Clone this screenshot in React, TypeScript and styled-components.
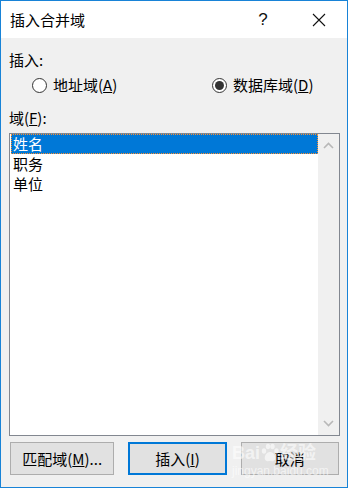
import React from "react";
import styled, { createGlobalStyle } from "styled-components";

const GlobalStyle = createGlobalStyle`
  html, body {
    margin: 0;
    padding: 0;
    background: #f0f0f0;
  }
  * {
    box-sizing: border-box;
  }
`;

const FONT = `"Noto Sans CJK SC", "Liberation Sans", sans-serif`;

interface IItem {
  name: string;
  selected?: boolean;
}

const items: IItem[] = [{ name: "姓名", selected: true }, { name: "职务" }, { name: "单位" }];

const Paw: React.FC = () => (
  <svg width="20" height="20" viewBox="0 0 20 20">
    <g fill="currentColor">
      <ellipse cx="4" cy="8" rx="2.2" ry="2.8" />
      <ellipse cx="8" cy="3.5" rx="2.2" ry="2.8" />
      <ellipse cx="12.5" cy="3.5" rx="2.2" ry="2.8" />
      <ellipse cx="16.5" cy="8" rx="2.2" ry="2.8" />
      <path d="M10 9 C6 9 4 14 5 16.5 C6 19 9 18 10 18 C11 18 14 19 15 16.5 C16 14 14 9 10 9 Z" />
    </g>
  </svg>
);

const App: React.FC = () => {
  return (
    <Dialog>
      <GlobalStyle />
      <TitleBar>
        <Title>插入合并域</Title>
        <CaptionButton>?</CaptionButton>
        <CaptionButton>
          <svg width="14" height="14" viewBox="0 0 14 14">
            <path d="M1 1 L13 13 M13 1 L1 13" stroke="#111" strokeWidth="1.1" />
          </svg>
        </CaptionButton>
      </TitleBar>
      <Body>
        <Label top={12}>插入:</Label>
        <RadioRow>
          <RadioItem width={180}>
            <RadioCircle />
            <span>
              地址域(<u>A</u>)
            </span>
          </RadioItem>
          <RadioItem>
            <RadioCircle checked />
            <span>
              数据库域(<u>D</u>)
            </span>
          </RadioItem>
        </RadioRow>
        <Label top={13}>
          域(<u>F</u>):
        </Label>
        <ListBox>
          <Items>
            {items.map((it) => (
              <Item key={it.name} selected={it.selected}>
                {it.name}
              </Item>
            ))}
          </Items>
          <ScrollBar>
            <svg width="11" height="7" viewBox="0 0 11 7">
              <path d="M1 6 L5.5 1.5 L10 6" fill="none" stroke="#b8b8b8" strokeWidth="1.6" />
            </svg>
            <svg width="11" height="7" viewBox="0 0 11 7">
              <path d="M1 1 L5.5 5.5 L10 1" fill="none" stroke="#b8b8b8" strokeWidth="1.6" />
            </svg>
          </ScrollBar>
        </ListBox>
        <Buttons>
          <Button width={105}>
            匹配域(<u>M</u>)...
          </Button>
          <Button width={99} primary>
            插入(<u>I</u>)
          </Button>
          <Button width={99}>取消</Button>
        </Buttons>
        <Watermark>
          <WaterLogo>
            Bai
            <Paw />
            经验
          </WaterLogo>
          <WaterUrl>jingyan.baidu.com</WaterUrl>
        </Watermark>
      </Body>
    </Dialog>
  );
};

const Dialog = styled.div`
  width: 348px;
  height: 488px;
  border: 1px solid #1883d7;
  display: flex;
  flex-direction: column;
  font-family: ${FONT};
  color: #000;
  background: #f0f0f0;
`;

const TitleBar = styled.div`
  height: 37px;
  background: #fff;
  display: flex;
  align-items: center;
  padding-left: 9px;
`;

const Title = styled.div`
  font-size: 15px;
  flex: 1;
  margin-top: -1px;
`;

const CaptionButton = styled.div`
  width: 56px;
  height: 37px;
  display: flex;
  align-items: center;
  justify-content: center;
  font-family: "Liberation Sans", sans-serif;
  font-size: 17px;
  color: #111;
`;

const Body = styled.div`
  position: relative;
  flex: 1;
  display: flex;
  flex-direction: column;
  padding: 0 8px 12px 8px;
  font-size: 15px;
`;

const Label = styled.div<{ top: number }>`
  margin-top: ${(p) => p.top}px;
  height: 20px;
  line-height: 20px;
`;

const RadioRow = styled.div`
  display: flex;
  margin-top: 5px;
  height: 20px;
  padding-left: 23px;
`;

const RadioItem = styled.div<{ width?: number }>`
  display: flex;
  align-items: center;
  gap: 6px;
  width: ${(p) => (p.width ? `${p.width}px` : "auto")};
  line-height: 20px;
`;

const RadioCircle = styled.span<{ checked?: boolean }>`
  flex: none;
  width: 15px;
  height: 15px;
  border-radius: 50%;
  border: 1px solid #333;
  background: #fff;
  display: flex;
  align-items: center;
  justify-content: center;
  &::after {
    content: "";
    display: ${(p) => (p.checked ? "block" : "none")};
    width: 9px;
    height: 9px;
    border-radius: 50%;
    background: #333;
  }
`;

const ListBox = styled.div`
  margin-top: 5px;
  height: 303px;
  width: 331px;
  border: 1px solid #828790;
  background: #fff;
  display: flex;
`;

const Items = styled.div`
  width: 308px;
  flex: none;
  padding-left: 1px;
  font-size: 15px;
`;

const Item = styled.div<{ selected?: boolean }>`
  height: 20px;
  line-height: 20px;
  padding-left: 2px;
  background: ${(p) => (p.selected ? "#0078d7" : "transparent")};
  color: ${(p) => (p.selected ? "#fff" : "#000")};
  outline: ${(p) => (p.selected ? "1px dotted #ff8f2e" : "none")};
  outline-offset: -1px;
`;

const ScrollBar = styled.div`
  width: 21px;
  flex: none;
  background: #f0f0f0;
  display: flex;
  flex-direction: column;
  justify-content: space-between;
  align-items: center;
  padding: 8px 0;
`;

const Buttons = styled.div`
  display: flex;
  gap: 14px;
  margin-top: 6px;
  padding-left: 1px;
`;

const Button = styled.div<{ width: number; primary?: boolean }>`
  width: ${(p) => p.width}px;
  height: 33px;
  background: #e1e1e1;
  border: ${(p) => (p.primary ? "2px solid #0078d7" : "1px solid #adadad")};
  display: flex;
  align-items: center;
  justify-content: center;
  font-size: 15px;
`;

const Watermark = styled.div`
  position: absolute;
  left: 231px;
  top: 404px;
  display: flex;
  flex-direction: column;
  color: rgba(255, 255, 255, 0.6);
  pointer-events: none;
`;

const WaterLogo = styled.div`
  display: flex;
  align-items: center;
  font-family: "Liberation Sans", ${FONT};
  font-size: 18px;
  font-weight: bold;
  line-height: 22px;
`;

const WaterUrl = styled.div`
  font-family: "Liberation Sans", sans-serif;
  font-size: 12px;
  line-height: 14px;
`;

export default App;
